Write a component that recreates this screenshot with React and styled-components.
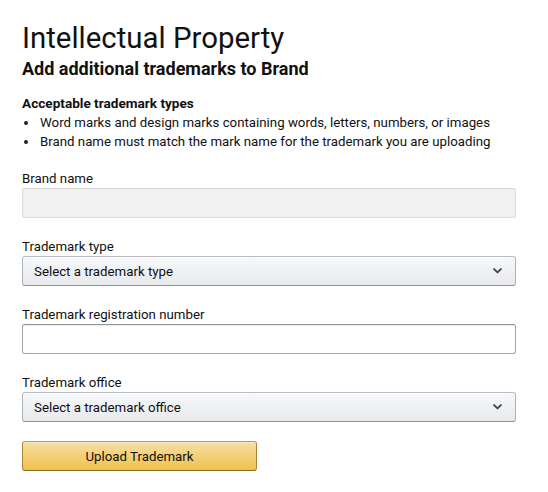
import React from "react";
import styled, { createGlobalStyle } from "styled-components";

const GlobalStyle = createGlobalStyle`
  html, body { margin: 0; padding: 0; background: #ffffff; }
  body {
    font-family: Roboto, "Liberation Sans", Arial, sans-serif;
    color: #111111;
    -webkit-font-smoothing: antialiased;
  }
  * { box-sizing: border-box; }
`;

const Page = styled.main`
  width: 548px;
  padding: 20px 32px 20px 22px;
  display: flex;
  flex-direction: column;
`;

const Title = styled.h1`
  margin: 0;
  font-size: 29.4px;
  line-height: 36px;
  font-weight: 400;
  color: #111111;
`;

const Subtitle = styled.h2`
  margin: 1px 0 0;
  font-size: 18px;
  line-height: 24px;
  font-weight: 700;
  color: #111111;
`;

const InfoBlock = styled.section`
  margin-top: 13px;
  display: flex;
  flex-direction: column;
`;

const InfoHeading = styled.h3`
  margin: 0;
  font-size: 13.6px;
  line-height: 19px;
  font-weight: 700;
  color: #111111;
`;

const BulletList = styled.ul`
  margin: 0;
  padding: 0;
  list-style: none;
  display: flex;
  flex-direction: column;
`;

const BulletItem = styled.li`
  display: flex;
  align-items: center;
  font-size: 13.27px;
  line-height: 19px;
  color: #111111;
  white-space: nowrap;
`;

const Dot = styled.span`
  flex: 0 0 18px;
  display: flex;
  align-items: center;
  padding-left: 2px;
  &::after {
    content: "";
    width: 4px;
    height: 4px;
    border-radius: 50%;
    background: #222222;
    margin-top: 1px;
  }
`;

const Form = styled.form`
  margin-top: 18px;
  display: flex;
  flex-direction: column;
  gap: 19px;
`;

const Field = styled.div`
  display: flex;
  flex-direction: column;
`;

const Label = styled.label`
  font-size: 13.27px;
  line-height: 19px;
  color: #111111;
`;

const TextInput = styled.input`
  width: 494px;
  height: 30px;
  margin: 0;
  padding: 0 11px;
  font-family: inherit;
  font-size: 13.27px;
  color: #111111;
  border-radius: 3px;
  outline: none;
  border: 1px solid ${(p) => (p.disabled ? "#dcdcdc" : "#a6a6a6")};
  border-top-color: ${(p) => (p.disabled ? "#d4d4d4" : "#949494")};
  background: ${(p) => (p.disabled ? "#f1f1f1" : "#ffffff")};
  box-shadow: ${(p) =>
    p.disabled ? "none" : "0 1px 0 rgba(255,255,255,.5), 0 1px 0 rgba(0,0,0,.07) inset"};
`;

const SelectBox = styled.div`
  width: 494px;
  height: 30px;
  padding: 0 10px 0 11px;
  display: flex;
  align-items: center;
  justify-content: space-between;
  border-radius: 3px;
  border: 1px solid #adb1b8;
  border-top-color: #b8bbc1;
  border-bottom-color: #8d9096;
  background: linear-gradient(to bottom, #f7f8fa, #e7e9ec);
  box-shadow: 0 1px 0 rgba(255, 255, 255, 0.6) inset;
  font-size: 13.27px;
  color: #111111;
  cursor: pointer;
`;

const Chevron = styled.svg`
  width: 9px;
  height: 6px;
  margin-right: 3px;
  display: block;
`;

const UploadButton = styled.button`
  width: 235px;
  height: 30px;
  margin: 0;
  padding: 0;
  font-family: inherit;
  font-size: 13.27px;
  color: #111111;
  border-radius: 3px;
  border: 1px solid #a88734;
  border-top-color: #b89a4c;
  border-bottom-color: #846a29;
  background: linear-gradient(to bottom, #f7dfa5, #f0c14b);
  box-shadow: 0 1px 0 rgba(255, 255, 255, 0.4) inset;
  cursor: pointer;
`;

function Select({ placeholder }) {
  return (
    <SelectBox role="combobox">
      <span>{placeholder}</span>
      <Chevron viewBox="0 0 9 6" aria-hidden="true">
        <path d="M1.1 1.1 L4.5 4.4 L7.9 1.1" fill="none" stroke="#444" strokeWidth="1.9" strokeLinecap="round" strokeLinejoin="round" />
      </Chevron>
    </SelectBox>
  );
}

const bullets = [
  "Word marks and design marks containing words, letters, numbers, or images",
  "Brand name must match the mark name for the trademark you are uploading",
];

export default function App() {
  return (
    <>
      <GlobalStyle />
      <Page>
        <Title>Intellectual Property</Title>
        <Subtitle>Add additional trademarks to Brand</Subtitle>
        <InfoBlock>
          <InfoHeading>Acceptable trademark types</InfoHeading>
          <BulletList>
            {bullets.map((b) => (
              <BulletItem key={b}>
                <Dot />
                {b}
              </BulletItem>
            ))}
          </BulletList>
        </InfoBlock>
        <Form onSubmit={(e) => e.preventDefault()}>
          <Field>
            <Label>Brand name</Label>
            <TextInput disabled />
          </Field>
          <Field>
            <Label>Trademark type</Label>
            <Select placeholder="Select a trademark type" />
          </Field>
          <Field>
            <Label>Trademark registration number</Label>
            <TextInput />
          </Field>
          <Field>
            <Label>Trademark office</Label>
            <Select placeholder="Select a trademark office" />
          </Field>
          <div>
            <UploadButton type="submit">Upload Trademark</UploadButton>
          </div>
        </Form>
      </Page>
    </>
  );
}
